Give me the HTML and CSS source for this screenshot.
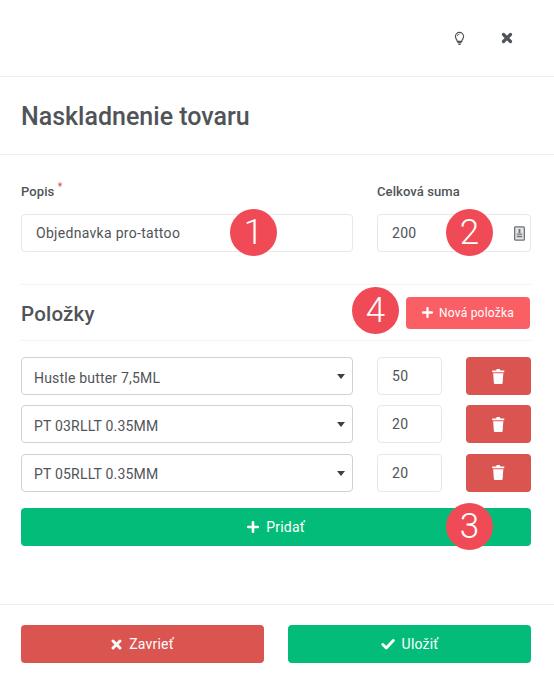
FILE: index.html
```html
<!DOCTYPE html>
<html lang="sk">
<head>
<meta charset="utf-8">
<title>Naskladnenie tovaru</title>
<link rel="stylesheet" href="styles.css">
</head>
<body>
<div class="modal">
  <header class="topbar">
    <svg class="icon-bulb" viewBox="0 0 14 18" width="11" height="15"><path d="M7 1.200a5.200 5.200 0 0 0-5.200 5.200c0 2.600 1.900 3.700 2.300 6.200h5.800c.4-2.500 2.300-3.600 2.300-6.200A5.200 5.200 0 0 0 7 1.200z" fill="none" stroke="#505458" stroke-width="1.500"/><path d="M4.400 13.600h5.200v1.600H4.400zM5.200 15.800h3.600l-.6 1.400H5.800z" fill="#505458"/><path d="M4 6.200A3 3 0 0 1 7 3.400" fill="none" stroke="#505458" stroke-width="1"/></svg>
    <svg class="icon-close" viewBox="0 0 12 12" width="12" height="12"><path d="M2.500 2.500l7 7M9.500 2.500l-7 7" stroke="#505458" stroke-width="3.200" stroke-linecap="round"/></svg>
  </header>
  <div class="titlebar"><h1>Naskladnenie tovaru</h1></div>
  <main class="content">
    <div class="grid-top">
      <div class="field">
        <label>Popis <sup class="req">*</sup></label>
        <div class="input">Objednavka pro-tattoo</div>
      </div>
      <div class="field">
        <label>Celková suma</label>
        <div class="input input-sum">200
          <svg viewBox="0 0 12 16" width="11" height="15"><rect x=".7" y=".7" width="10.600" height="14.600" rx="1" fill="#e3e4e6" stroke="#6f7379" stroke-width="1.400"/><path d="M5 3h2v4.500H5zM3 8h6v1.400H3zM3 10.500h6V12H3z" fill="#6f7379"/></svg>
        </div>
      </div>
    </div>
    <div class="items-head">
      <h2>Položky</h2>
      <button class="btn btn-new"><svg viewBox="0 0 12 12" width="11" height="11"><path d="M6 1.200v9.600M1.200 6h9.600" stroke="#fff" stroke-width="2.500" stroke-linecap="round"/></svg>Nová položka</button>
    </div>
    <div class="rows">
      <div class="row">
        <div class="select">Hustle butter 7,5ML<i class="caret"></i></div>
        <div class="input">50</div>
        <button class="btn btn-del"><svg viewBox="1 1 10 12.400" width="12.500" height="15"><path d="M1 2.200h3.200L4.800 1h2.400l.6 1.200H11v1.400H1zM1.800 4.600h8.400l-.6 8.200c0 .3-.3.6-.7.600H3.100c-.4 0-.7-.3-.7-.6z" fill="#fff"/></svg></button>
      </div>
      <div class="row">
        <div class="select">PT 03RLLT 0.35MM<i class="caret"></i></div>
        <div class="input">20</div>
        <button class="btn btn-del"><svg viewBox="1 1 10 12.400" width="12.500" height="15"><path d="M1 2.200h3.200L4.800 1h2.400l.6 1.200H11v1.400H1zM1.800 4.600h8.400l-.6 8.200c0 .3-.3.6-.7.600H3.100c-.4 0-.7-.3-.7-.6z" fill="#fff"/></svg></button>
      </div>
      <div class="row">
        <div class="select">PT 05RLLT 0.35MM<i class="caret"></i></div>
        <div class="input">20</div>
        <button class="btn btn-del"><svg viewBox="1 1 10 12.400" width="12.500" height="15"><path d="M1 2.200h3.200L4.800 1h2.400l.6 1.200H11v1.400H1zM1.800 4.600h8.400l-.6 8.200c0 .3-.3.6-.7.600H3.100c-.4 0-.7-.3-.7-.6z" fill="#fff"/></svg></button>
      </div>
    </div>
    <button class="btn btn-green btn-add"><svg viewBox="0 0 12 12" width="12" height="12"><path d="M6 1.200v9.600M1.200 6h9.600" stroke="#fff" stroke-width="2.600" stroke-linecap="round"/></svg>Pridať</button>
  </main>
  <footer class="footer">
    <button class="btn btn-red"><svg viewBox="0 0 12 12" width="11" height="11"><path d="M2.200 2.200l7.600 7.600M9.800 2.200l-7.600 7.600" stroke="#fff" stroke-width="3.200" stroke-linecap="round"/></svg>Zavrieť</button>
    <button class="btn btn-green"><svg viewBox="0 0 14 12" width="14" height="12"><path d="M1.800 6.500l3.500 3.500 7-7.500" fill="none" stroke="#fff" stroke-width="2.800" stroke-linecap="round" stroke-linejoin="round"/></svg>Uložiť</button>
  </footer>
  <span class="badge badge-1">1</span>
  <span class="badge badge-2">2</span>
  <span class="badge badge-3">3</span>
  <span class="badge badge-4">4</span>
</div>
</body>
</html>
```

FILE: styles.css
```css
* { box-sizing: border-box; }
html, body { margin: 0; padding: 0; background: #fff; }
body { font-family: Roboto, "Liberation Sans", sans-serif; color: #505458; font-size: 14px; }
.modal { position: relative; width: 554px; height: 679px; overflow: hidden; }
.topbar { height: 77px; border-bottom: 1px solid #eeeff1; display: flex; justify-content: flex-end; align-items: center; padding: 0 41px 0 0; gap: 36px; }
.titlebar { height: 78px; border-bottom: 1px solid #eeeff1; padding: 2px 21px 0; display: flex; align-items: center; }
h1 { margin: 0; font-size: 25px; font-weight: 500; color: #505458; }
.content { padding: 0 23px 0 21px; height: 450px; border-bottom: 1px solid #eeeff1; }
.grid-top { display: grid; grid-template-columns: 332px 154px; column-gap: 24px; padding-top: 29px; }
.field { display: flex; flex-direction: column; }
label { font-size: 13px; font-weight: 500; line-height: 16px; height: 30px; color: #505458; letter-spacing: 0.1px; }
.req { color: #e0565a; font-size: 10px; line-height: 0; vertical-align: 6px; }
.input { height: 38px; border: 1px solid #e6e8eb; border-radius: 4px; display: flex; align-items: center; padding: 0 14px; font-size: 14px; letter-spacing: 0.3px; color: #505458; background: #fff; }
.input-sum { justify-content: space-between; padding-right: 5px; }
.items-head { margin-top: 32px; height: 57px; border-top: 1px solid #f1f2f4; border-bottom: 1px solid #f1f2f4; display: flex; justify-content: space-between; align-items: center; padding-right: 1px; }
h2 { margin: 2px 0 0; font-size: 20.500px; font-weight: 500; letter-spacing: 0.2px; color: #505458; }
.btn { border: 0; border-radius: 4px; color: #fff; font-family: inherit; display: flex; align-items: center; justify-content: center; gap: 7px; font-size: 14px; height: 38px; padding: 0; letter-spacing: 0.2px; }
.btn-new { width: 124px; height: 32px; background: #fb5f66; font-size: 12px; letter-spacing: 0.22px; gap: 6px; }
.rows { padding-top: 16px; display: flex; flex-direction: column; gap: 10.250px; }
.row { display: grid; grid-template-columns: 332px 65px 65px; column-gap: 24px; }
.select { position: relative; height: 38px; border: 1px solid #cdd1d8; border-radius: 4px; padding: 3px 12px 0; display: flex; align-items: center; font-size: 14px; letter-spacing: 0.2px; color: #505458; }
.caret { position: absolute; right: 7px; top: 16px; width: 0; height: 0; border-left: 4px solid transparent; border-right: 4px solid transparent; border-top: 5px solid #3c4148; }
.btn-del { height: 38px; background: #da5450; }
.btn-green { background: #04bc79; }
.btn-red { background: #da5450; }
.btn-add { width: 510px; margin-top: 16px; }
.footer { display: grid; grid-template-columns: 243px 243px; column-gap: 24px; padding: 20px 23px 0 21px; }
.badge { position: absolute; width: 47px; height: 47px; border-radius: 50%; background: #f04a56; color: #fff; font-size: 35px; font-weight: 300; display: flex; align-items: center; justify-content: center; line-height: 1; }
.badge-1 { left: 230px; top: 209px; }
.badge-2 { left: 446px; top: 209px; }
.badge-3 { left: 446px; top: 503px; }
.badge-4 { left: 352px; top: 287px; }
```
